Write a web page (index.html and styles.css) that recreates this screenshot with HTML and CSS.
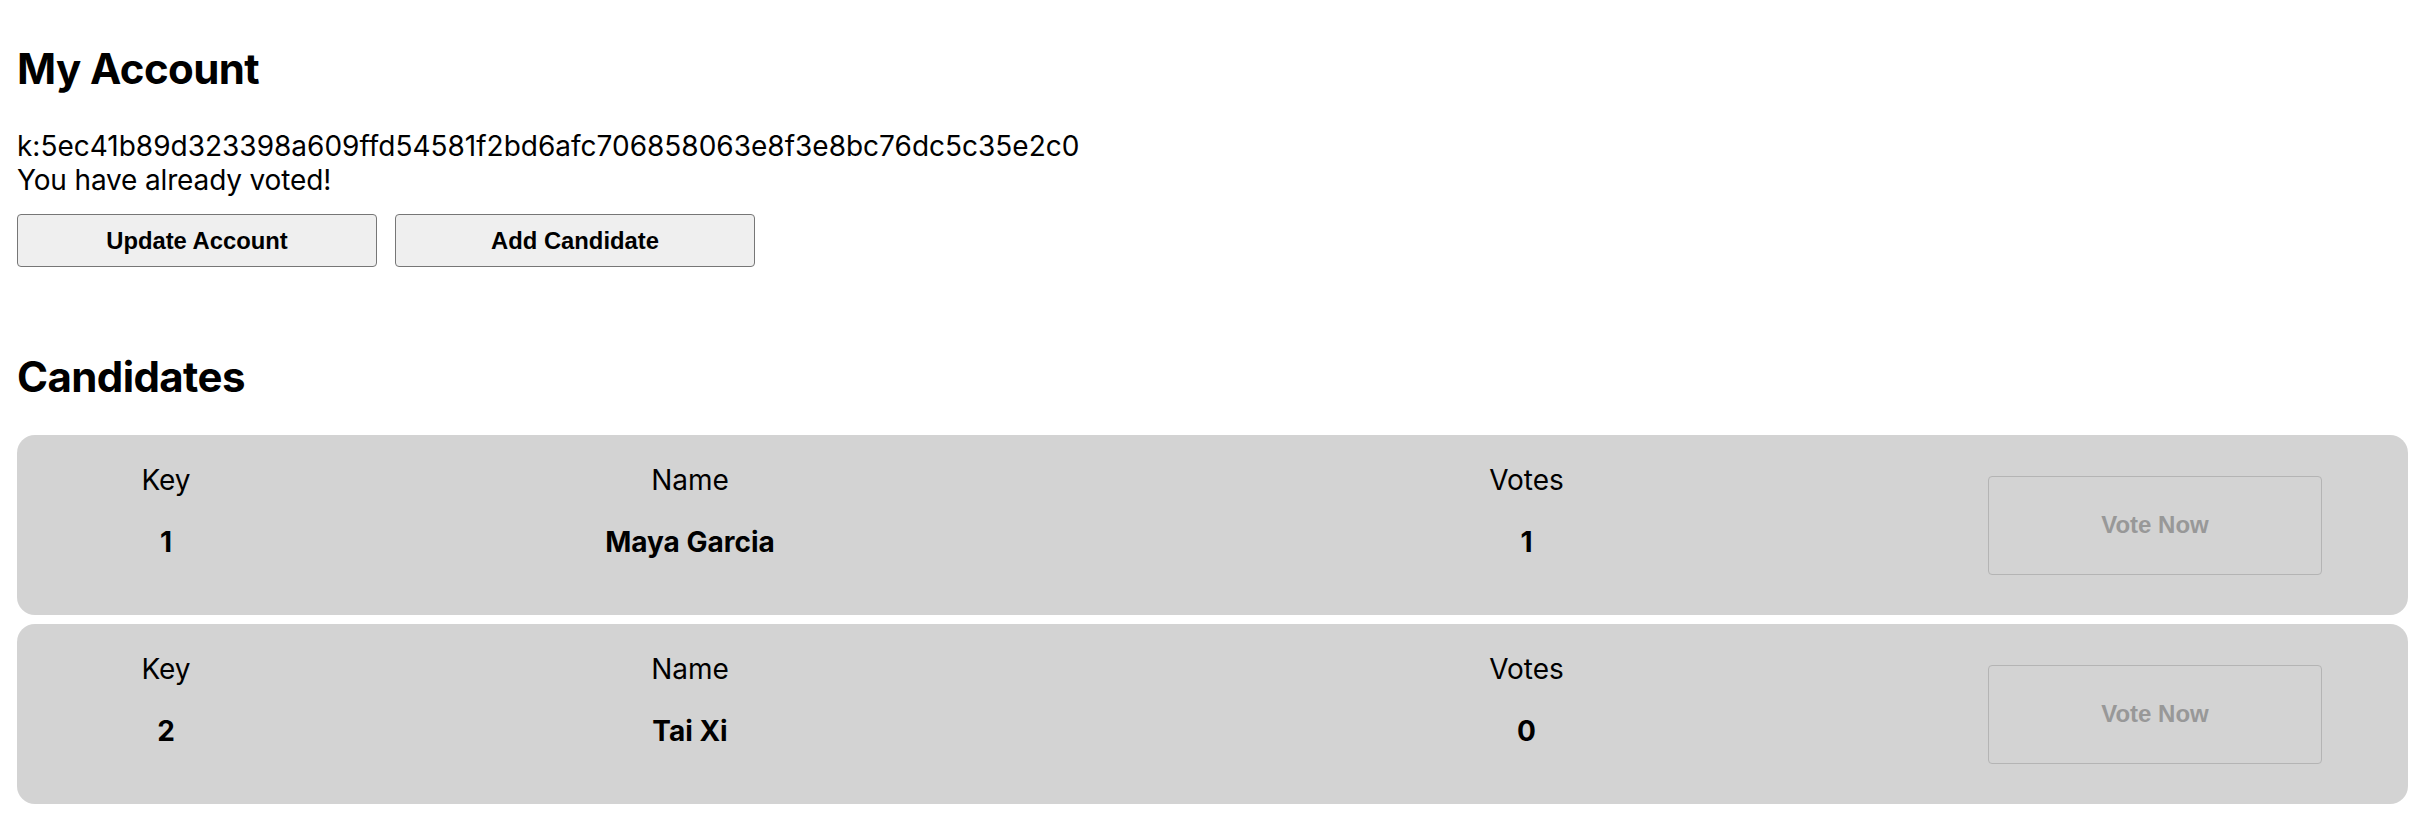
FILE: index.html
```html
<!DOCTYPE html>
<html lang="en">
<head>
<meta charset="utf-8">
<title>Voting</title>
<link rel="stylesheet" href="styles.css">
</head>
<body>
<main class="page">
  <section class="account">
    <h2 class="section-title account-title">My Account</h2>
    <div class="account-key">k:5ec41b89d323398a609ffd54581f2bd6afc706858063e8f3e8bc76dc5c35e2c0</div>
    <div class="account-status">You have already voted!</div>
    <div class="account-actions">
      <button class="btn" type="button">Update Account</button>
      <button class="btn" type="button">Add Candidate</button>
    </div>
  </section>
  <section class="candidates">
    <h2 class="section-title candidates-title">Candidates</h2>
    <div class="candidate-list">
      <div class="candidate">
        <div class="cell">
          <div class="cell-label">Key</div>
          <p class="cell-value">1</p>
        </div>
        <div class="cell">
          <div class="cell-label">Name</div>
          <p class="cell-value">Maya Garcia</p>
        </div>
        <div class="cell">
          <div class="cell-label">Votes</div>
          <p class="cell-value">1</p>
        </div>
        <button class="vote-btn" type="button" disabled>Vote Now</button>
      </div>
      <div class="candidate">
        <div class="cell">
          <div class="cell-label">Key</div>
          <p class="cell-value">2</p>
        </div>
        <div class="cell">
          <div class="cell-label">Name</div>
          <p class="cell-value">Tai Xi</p>
        </div>
        <div class="cell">
          <div class="cell-label">Votes</div>
          <p class="cell-value">0</p>
        </div>
        <button class="vote-btn" type="button" disabled>Vote Now</button>
      </div>
    </div>
  </section>
</main>
</body>
</html>
```

FILE: styles.css
```css
html, body {
  margin: 0;
  padding: 0;
  background: #ffffff;
}

body {
  font-family: Inter, "Noto Sans", sans-serif;
  font-size: 28px;
  color: #000;
}

.page {
  padding: 0 16px 0 17px;
}

.section-title {
  font-size: 42px;
  font-weight: 700;
  line-height: normal;
  letter-spacing: -0.6px;
}

.account-title {
  margin: 43px 0 35px;
}

.account-key,
.account-status {
  line-height: normal;
}

.account-status {
  letter-spacing: -0.15px;
}

.account-actions {
  display: flex;
  gap: 18px;
  margin: 17px 0 84px;
}

.btn {
  width: 360px;
  height: 53px;
  font-family: "Liberation Sans", Arial, sans-serif;
  font-size: 23.8px;
  font-weight: 700;
  color: #000;
  background: #efefef;
  border: 1px solid #767676;
  border-radius: 4px;
  padding: 0;
}

.candidates-title {
  margin: 0 0 33px;
}

.candidate-list {
  display: flex;
  flex-direction: column;
  gap: 9px;
}

.candidate {
  display: grid;
  grid-template-columns: 298px 750px 923px 334px;
  align-items: center;
  padding: 28px 86px 28px 0;
  background: #d3d3d3;
  border-radius: 18px;
}

.cell {
  text-align: center;
}

.cell-label {
  line-height: normal;
}

.cell-value {
  margin: 28px 0;
  font-weight: 700;
  line-height: normal;
}

.vote-btn {
  width: 334px;
  height: 99px;
  font-family: "Liberation Sans", Arial, sans-serif;
  font-size: 24px;
  font-weight: 700;
  color: #989898;
  background: transparent;
  border: 1px solid #b4b4b4;
  border-radius: 4px;
  padding: 0;
}
```
